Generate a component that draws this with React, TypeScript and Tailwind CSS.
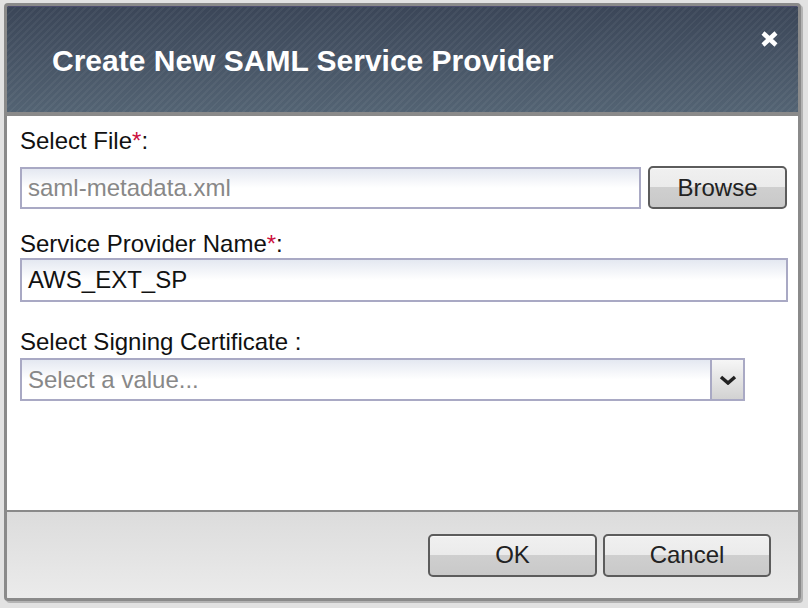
import React from 'react';

const font = { fontFamily: '"Liberation Sans", Arial, Helvetica, sans-serif' };

function GlossButton({ label, width }: { label: string; width: string }) {
  return (
    <button
      className={`${width} h-[43px] rounded-[5px] border-2 border-[#5c5c5c] bg-[linear-gradient(to_bottom,#f0f0f0_0%,#ebebeb_48%,#cfcfcf_50%,#c9c9c9_100%)] text-[24px] leading-none text-[#222] shadow-[inset_0_1px_0_#fafafa]`}
    >
      {label}
    </button>
  );
}

export default function App() {
  return (
    <div className="w-[808px] h-[608px] bg-[#e2e2e2] pl-[4px] pt-[3px]" style={font}>
      <div className="w-[797px] h-[598px] border-[3px] border-[#8a8a8a] rounded-[4px] shadow-[2px_2px_0_#b4b4b4] flex flex-col overflow-hidden">
        {/* Header */}
        <div className="h-[106px] flex justify-between bg-[repeating-linear-gradient(135deg,rgba(255,255,255,0.045)_0px,rgba(255,255,255,0.045)_2px,transparent_2px,transparent_5px),linear-gradient(to_bottom,#3b4658,#536373)] border-t border-[#4c4d6e]">
          <h1 className="pl-[45px] pt-[39px] text-[30px] leading-[30px] font-bold text-white">
            Create New SAML Service Provider
          </h1>
          <button className="mt-[23px] mr-[19px] w-[19px] h-[18px]">
            <svg viewBox="0 0 19 18" width="19" height="18">
              <path d="M3 3 L16 15 M16 3 L3 15" stroke="white" strokeWidth="4.5" strokeLinecap="butt" />
            </svg>
          </button>
        </div>
        <div className="h-[4px] bg-[#8a8a8a]" />

        {/* Body */}
        <div className="h-[394px] bg-white pl-[13px] pr-[10px] pt-[13px] text-[24px] leading-[24px] text-[#111]">
          <div>
            Select File<span className="text-[#cc1040]">*</span>:
          </div>
          <div className="mt-[13px] flex items-end gap-[7px]">
            <div className="w-[621px] h-[42px] border-2 border-[#a9a9c4] bg-[linear-gradient(to_bottom,#e4e8f1,#ffffff_50%)] flex items-center pl-[6px] text-[#888]">
              saml-metadata.xml
            </div>
            <GlossButton label="Browse" width="w-[139px]" />
          </div>

          <div className="mt-[23px]">
            Service Provider Name<span className="text-[#cc1040]">*</span>:
          </div>
          <div className="mt-[2px] w-[768px] h-[44px] border-2 border-[#a9a9c4] bg-[linear-gradient(to_bottom,#e4e8f1,#ffffff_50%)] flex items-center pl-[6px] text-[#111]">
            AWS_EXT_SP
          </div>

          <div className="mt-[28px]">Select Signing Certificate :</div>
          <div className="mt-[4px] w-[725px] h-[43px] border-2 border-[#a9a9c4] flex">
            <div className="flex-1 bg-[linear-gradient(to_bottom,#e4e8f1,#ffffff_50%)] flex items-center pl-[6px] text-[#888]">
              Select a value...
            </div>
            <div className="w-[33px] border-l-2 border-[#a9a9c4] bg-[linear-gradient(to_bottom,#f6f6f6,#d2d2d2)] flex items-center justify-center">
              <svg viewBox="0 0 18 10" width="18" height="10">
                <path d="M2 2 L9 8 L16 2" fill="none" stroke="#222" strokeWidth="3.5" />
              </svg>
            </div>
          </div>
        </div>

        {/* Footer */}
        <div className="h-[2px] bg-[#8a8a8a]" />
        <div className="flex-1 bg-[linear-gradient(to_bottom,#dcdcdc,#ebebeb)] flex items-center justify-end gap-[6px] pr-[27px]">
          <GlossButton label="OK" width="w-[169px]" />
          <GlossButton label="Cancel" width="w-[168px]" />
        </div>
      </div>
    </div>
  );
}
